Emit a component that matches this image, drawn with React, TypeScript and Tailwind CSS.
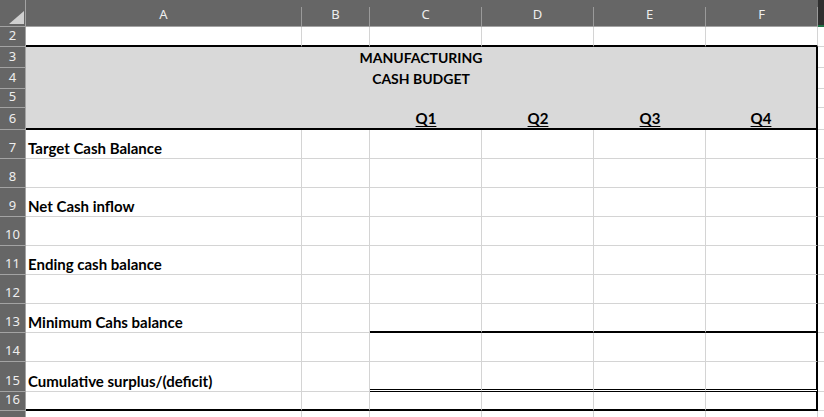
import React from "react";

const cols = ["A", "B", "C", "D", "E", "F"];

const font = { fontFamily: "Lato, 'Liberation Sans', sans-serif" };

const RowHead = ({ n, className = "" }: { n?: number; className?: string }) => (
  <div
    className={`flex items-end justify-center bg-[#666666] border-r border-b border-[#a3a3a3] text-[13px] leading-none text-[#eeeeee] pb-[4px] ${className}`}
    style={{ fontFamily: "'Noto Sans', 'Open Sans', sans-serif" }}
  >
    {n}
  </div>
);

const ColHead = ({ label }: { label: string }) => (
  <div className="flex bg-[#666666] border-b border-[#a3a3a3]">
    <div
      className="flex-1 flex items-end justify-center pb-[5px] text-[13px] leading-none text-[#eeeeee]"
      style={{ fontFamily: "'Noto Sans', 'Open Sans', sans-serif" }}
    >
      {label}
    </div>
    <div className="w-px h-[19px] self-end bg-[#9a9a9a]" />
  </div>
);

const labels: Record<number, string> = {
  7: "Target Cash Balance",
  9: "Net Cash inflow",
  11: "Ending cash balance",
  13: "Minimum Cahs balance",
  15: "Cumulative surplus/(deficit)",
};

const BodyRow = ({ n }: { n: number }) => {
  const last = n === 16;
  let valueBorder = "border-b border-[#d4d4d4]";
  if (n === 13) valueBorder = "border-b-2 border-b-black";
  if (n === 15) valueBorder = "border-b-[3px] border-double border-b-black";
  if (last) valueBorder = "border-b-2 border-b-black";
  const leftBorder = last ? "border-b-2 border-b-black" : "border-b border-[#d4d4d4]";

  return (
    <>
      <RowHead n={n} />
      <div
        className={`flex items-end pl-[2px] pb-[1px] border-r border-r-[#d4d4d4] ${leftBorder} text-[15px] leading-[17px] font-bold text-black`}
        style={font}
      >
        {labels[n]}
      </div>
      <div className={`border-r border-r-[#d4d4d4] ${leftBorder}`} />
      <div className={`border-r border-r-[#d4d4d4] ${valueBorder}`} />
      <div className={`border-r border-r-[#d4d4d4] ${valueBorder}`} />
      <div className={`border-r border-r-[#d4d4d4] ${valueBorder}`} />
      <div className={`border-r-2 border-r-black ${valueBorder}`} />
      <div className="border-b border-[#d4d4d4]" />
    </>
  );
};

export default function App() {
  const bodyRows = [7, 8, 9, 10, 11, 12, 13, 14, 15, 16];

  return (
    <div className="w-[824px] h-[417px] overflow-hidden bg-white">
      <div className="grid h-full grid-cols-[26px_276px_68px_112px_112px_112px_112px_1fr] grid-rows-[27px_20px_21px_21px_19px_22px_29px_29px_29px_29px_29px_29px_29px_29px_30px_19px_1fr]">
        {/* column header row */}
        <div className="flex items-end justify-end bg-[#666666] border-r border-b border-[#a3a3a3] pr-[1px] pb-[2px]">
          <svg width="15" height="13" viewBox="0 0 15 13">
            <polygon points="0,13 15,13 15,0" fill="#d0d0d0" />
          </svg>
        </div>
        {cols.map((c) => (
          <ColHead key={c} label={c} />
        ))}
        <div className="bg-[#2f2f2f] border-b-2 border-b-[#217346]" />

        {/* row 2 */}
        <RowHead n={2} className="pb-[3px]" />
        {cols.map((c) => (
          <div
            key={c}
            className="border-r border-r-[#d4d4d4] border-b-2 border-b-black"
          />
        ))}
        <div className="border-b border-[#d4d4d4]" />

        {/* rows 3 - 5 : title band */}
        <RowHead n={3} />
        <div
          className="col-span-6 flex items-end justify-center pb-[2px] bg-[#d9d9d9] border-r-2 border-r-black text-[14px] leading-[17px] font-bold text-black"
          style={font}
        >
          MANUFACTURING
        </div>
        <div className="border-b border-[#d4d4d4]" />

        <RowHead n={4} />
        <div
          className="col-span-6 flex items-end justify-center pb-[2px] bg-[#d9d9d9] border-r-2 border-r-black text-[14px] leading-[17px] font-bold text-black"
          style={font}
        >
          CASH BUDGET
        </div>
        <div className="border-b border-[#d4d4d4]" />

        <RowHead n={5} />
        <div className="col-span-6 bg-[#d9d9d9] border-r-2 border-r-black" />
        <div className="border-b border-[#d4d4d4]" />

        {/* row 6 : quarters */}
        <RowHead n={6} />
        <div className="col-span-2 bg-[#d9d9d9] border-b-2 border-b-black" />
        {["Q1", "Q2", "Q3", "Q4"].map((q, i) => (
          <div
            key={q}
            className={`flex items-end justify-center pb-[1px] bg-[#d9d9d9] border-b-2 border-b-black text-[15px] leading-[17px] font-bold text-black ${
              i === 3 ? "border-r-2 border-r-black" : ""
            }`}
            style={font}
          >
            <span className="underline underline-offset-2">{q}</span>
          </div>
        ))}
        <div className="border-b border-[#d4d4d4]" />

        {bodyRows.map((n) => (
          <BodyRow key={n} n={n} />
        ))}

        {/* row 17, cut off at the window edge */}
        <div className="bg-[#666666] border-r border-[#a3a3a3]" />
        {cols.map((c) => (
          <div key={c} className="border-r border-r-[#d4d4d4]" />
        ))}
        <div />
      </div>
    </div>
  );
}
